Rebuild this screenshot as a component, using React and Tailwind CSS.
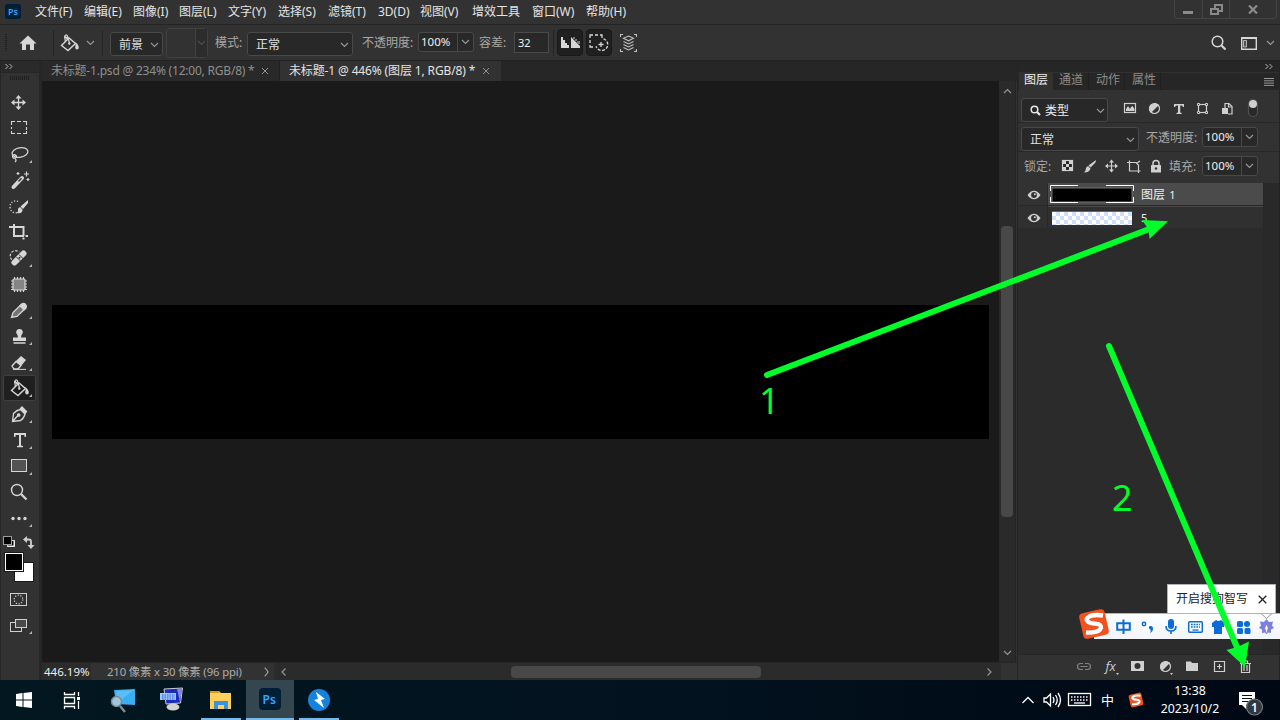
const menus = [
    { label: '文件(F)', width: 'w-[49px]' },
    { label: '编辑(E)', width: 'w-[49px]' },
    { label: '图像(I)', width: 'w-[46px]' },
    { label: '图层(L)', width: 'w-[49px]' },
    { label: '文字(Y)', width: 'w-[50px]' },
    { label: '选择(S)', width: 'w-[50px]' },
    { label: '滤镜(T)', width: 'w-[50px]' },
    { label: '3D(D)', width: 'w-[42px]' },
    { label: '视图(V)', width: 'w-[52px]' },
    { label: '增效工具', width: 'w-[60px]' },
    { label: '窗口(W)', width: 'w-[54px]' },
    { label: '帮助(H)', width: 'w-[50px]' },
];

const Chevron = ({ className = '' }) => (
    <svg width="9" height="6" viewBox="0 0 9 6" fill="none" stroke="#969696" strokeWidth="1.2" className={`shrink-0 ${className}`}>
        <path d="M1 1l3.5 3.5L8 1" />
    </svg>
);

const Select = ({ label, className = '' }) => (
    <div className={`flex h-6 shrink-0 items-center justify-between rounded-[3px] border border-[#484848] bg-[#282828] pt-[2px] pr-[3px] pl-2 text-[#e0e0e0] ${className}`}>
        <span>{label}</span>
        <Chevron />
    </div>
);

const NumberBox = ({ value, className = '' }) => (
    <div className={`flex h-5 w-14 shrink-0 rounded-[3px] border border-[#484848] bg-[#282828] leading-[18px] text-[#eeeeee] ${className}`}>
        <span className="w-[39px] border-r border-[#484848] pl-[2px] text-[11.500px]">{value}</span>
        <span className="flex flex-1 items-center justify-center">
            <Chevron />
        </span>
    </div>
);

const Bucket = () => (
    <g fill="none" stroke="#d6d6d6" strokeWidth="1.4">
        <path d="M11.500 15.500L19 8l6.500 5.500L18 20.500z" />
        <path d="M19.500 13l-2-7q-.8-1.500-2-.8t-.8 2l.8 5" strokeWidth="1.200" />
        <path d="M14.500 6.500l3.500 2.500" strokeWidth="2" />
        <path d="M19.500 8.500l5 3.500q4 1.500 4.300 5.500 0 2-1.800 2t-1.800-2l.5-3.500z" fill="#d6d6d6" stroke="none" />
        <circle cx="19.300" cy="13.500" r="1.200" fill="#d6d6d6" stroke="none" />
    </g>
);

// every tool is drawn in a 40x26 cell
const tools = [
    {
        id: 'move',
        icon: (
            <g fill="#d6d6d6" stroke="#d6d6d6">
                <path d="M18.500 8v11M13 13.500h11" strokeWidth="1.300" />
                <path d="M18.500 6l3 3.500h-6zM18.500 21l3-3.500h-6zM11 13.500l3.500-3v6zM26 13.500l-3.500-3v6z" stroke="none" />
            </g>
        ),
    },
    { id: 'marquee', icon: <path d="M11.500 10V6.500H15M17 6.500h4M23 6.500h3.500V10M26.500 12v3M26.500 16v2.500H23M21 18.500h-4M15 18.500h-3.500V16M11.500 14v-2" fill="none" stroke="#d6d6d6" strokeWidth="1.100" /> },
    {
        id: 'lasso',
        more: true,
        icon: (
            <g fill="none" stroke="#d6d6d6" strokeWidth="1.300">
                <ellipse cx="20" cy="11.500" rx="8" ry="4.800" transform="rotate(-10 20 11.500)" />
                <path d="M12.500 14q0 4 2.500 3t1-2.500t-3 0M15 17.500q2 1.500 0 3.500" />
            </g>
        ),
    },
    {
        id: 'wand',
        icon: (
            <g stroke="#d6d6d6">
                <path d="M13.500 20l8.500-9" strokeWidth="4" strokeLinecap="round" />
                <path d="M18.500 14.500l3-3.300" stroke="#323232" strokeWidth="1.400" />
                <path d="M18 5v3M16.500 6.500h3M26.500 4.500v5M24 7h5M28 11v3M26.500 12.500h3" strokeWidth="1.200" />
            </g>
        ),
    },
    {
        id: 'quick',
        icon: (
            <g>
                <path d="M18 8.500a5.500 6 0 1 0 1 10" fill="none" stroke="#d6d6d6" strokeWidth="1.400" strokeDasharray="1.200 1.700" />
                <path d="M28 7v3l-5 6-2.500-2.500zM20 14l2.500 2.500q0 4-4 3.700l-2-.3q2-1 1.500-3t2-2.900z" fill="#d6d6d6" />
            </g>
        ),
    },
    { id: 'crop', icon: <path d="M9 8h14.500v9M14 5v12h10M25.500 17h2.500M23.500 18.500v2" fill="none" stroke="#d6d6d6" strokeWidth="2" /> },
    {
        id: 'heal',
        more: true,
        icon: (
            <g>
                <circle cx="15.500" cy="11" r="5.300" fill="none" stroke="#d6d6d6" strokeWidth="1.200" strokeDasharray="2.500 1.500" />
                <path d="M14.500 17.500l9-9" stroke="#323232" strokeWidth="8" strokeLinecap="round" />
                <path d="M14.500 17.500l9-9" stroke="#d6d6d6" strokeWidth="6" strokeLinecap="round" />
                <path d="M16.500 12l5 5M19 9.500l5 5" stroke="#323232" />
                <circle cx="19.500" cy="12.800" r="1" fill="#323232" />
            </g>
        ),
    },
    {
        id: 'patch',
        icon: (
            <g stroke="#d6d6d6" strokeWidth="1.200">
                <path d="M14.500 6v15M17.500 6v15M20.500 6v15M23.500 6v15M11 10h16M11 13h16M11 16h16M11 18.500h16" />
                <rect x="13" y="8" width="12" height="11" rx="1" fill="#858585" />
            </g>
        ),
    },
    {
        id: 'pencil',
        more: true,
        icon: (
            <g stroke="#d6d6d6" strokeWidth="1.300">
                <path d="M11.500 20.500l1.500-5 9-8.700q2-1 3.500.7t.3 3.500L17 19.500z" fill="#747474" />
                <path d="M21.500 7.500q2-1.500 3.700.3t.3 3.700l-1.500 1.300-4-4z" fill="#d6d6d6" />
            </g>
        ),
    },
    { id: 'stamp', more: true, icon: <path d="M19.500 6a3.300 3.300 0 0 1 2 6l-.5 2.500h5v3.500H13v-3.500h5l-.5-2.500a3.300 3.300 0 0 1 2-6zM13.500 19.300h12v1.500h-12z" fill="#d6d6d6" /> },
    {
        id: 'eraser',
        more: true,
        icon: (
            <g>
                <path d="M12 17l4-4.500 5 4-3 3.500h-4z" fill="none" stroke="#d6d6d6" strokeWidth="1.300" />
                <path d="M16 12l5-5 5 4-5 6z" fill="#d6d6d6" />
                <path d="M13 20.400h13" stroke="#d6d6d6" />
            </g>
        ),
    },
    { id: 'bucket', more: true, active: true, icon: <Bucket /> },
    {
        id: 'pen',
        more: true,
        icon: (
            <g fill="none" stroke="#d6d6d6" strokeWidth="1.300">
                <path d="M12.500 20.500l1-8q3-3.500 7-4l4.500 4.500q-1 4.500-4.500 6.500zM12.500 20.500l5.500-6" />
                <path d="M20.500 7.500l1.500-1.500 4.500 4.500-1.500 2z" fill="#d6d6d6" />
                <circle cx="18.700" cy="14" r="1.200" fill="#d6d6d6" />
            </g>
        ),
    },
    { id: 'type', more: true, icon: <path d="M14 6h12v4h-1.300l-.5-2H21v10.500l2 .5v1.200h-6V19l2-.5V8h-3.200l-.5 2H14z" fill="#d6d6d6" /> },
    { id: 'shape', more: true, icon: <rect x="11.500" y="6.500" width="15" height="12" fill="#535353" stroke="#d6d6d6" /> },
    {
        id: 'zoom',
        icon: (
            <g fill="none" stroke="#d6d6d6">
                <circle cx="17" cy="11" r="5.500" strokeWidth="1.400" />
                <path d="M21 15l5.500 5.500" strokeWidth="2.300" />
            </g>
        ),
    },
    {
        id: 'more',
        more: true,
        icon: (
            <g fill="#d6d6d6">
                <circle cx="13" cy="13.500" r="1.700" />
                <circle cx="19" cy="13.500" r="1.700" />
                <circle cx="25" cy="13.500" r="1.700" />
            </g>
        ),
    },
];

const MenuBar = () => (
    <div className="flex h-[25px] shrink-0 border-b border-[#232323]">
        <div className="mt-1 mr-[14px] ml-[5px] flex h-[15px] w-4 items-center justify-center rounded-[3px] bg-[#001e36] text-[9px] font-semibold text-[#31a8ff]">Ps</div>
        {menus.map((m) => (
            <span key={m.label} className={`${m.width} shrink-0 whitespace-nowrap leading-6 text-[#e4e4e4]`}>{m.label}</span>
        ))}
        <div className="mr-[3px] ml-auto flex h-[19px] w-[103px] rounded-b border border-t-0 border-[#444444] text-[#8a8a8a]">
            <div className="flex w-7 justify-center border-r border-[#444444] pr-px">
                <i className="mt-[11px] h-[3px] w-[10px] bg-[#8a8a8a]" />
            </div>
            <div className="flex w-[27px] justify-center border-r border-[#444444]">
                <svg width="13" height="12" viewBox="0 0 13 12" className="mt-1" fill="none" stroke="#8a8a8a" strokeWidth="2">
                    <path d="M5 4V1h7v6H8M1 5h7v5H1z" />
                </svg>
            </div>
            <div className="flex flex-1 justify-center">
                <svg width="10" height="9" viewBox="0 0 10 9" className="mt-[5px]" stroke="#8a8a8a" strokeWidth="2.200">
                    <path d="M1 .5l8 8M9 .5l-8 8" />
                </svg>
            </div>
        </div>
    </div>
);

const OptionsBar = () => (
    <div className="flex h-9 shrink-0 items-center border-b border-[#232323]">
        <div className="ml-[5px] h-[18px] w-[2px] bg-[repeating-linear-gradient(#1f1f1f_0_1px,#323232_1px_2px)]" />
        <svg width="18" height="16" viewBox="0 0 18 16" fill="#d6d6d6" className="ml-3">
            <path d="M9 .5l8.500 8H15V15h-4V9.500H7V15H3V8.500H.5z" />
        </svg>
        <i className="ml-4 h-[26px] w-px bg-[#242424]" />
        <svg width="22" height="26" viewBox="9 0 22 26" className="ml-[5px]">
            <Bucket />
        </svg>
        <Chevron className="ml-[5px]" />
        <i className="ml-[7px] h-[26px] w-px bg-[#242424]" />
        <Select label="前景" className="mt-[2px] ml-[7px] w-[53px]" />
        <div className="ml-[3px] flex h-[30px] w-[42px] items-center justify-end rounded-sm border border-[#414141]">
            <div className="flex h-full w-3 items-center justify-center border-l border-[#414141] bg-[#2c2c2c]">
                <Chevron className="opacity-30" />
            </div>
        </div>
        <span className="ml-[7px] w-8 shrink-0 text-[#a8a8a8]">模式:</span>
        <Select label="正常" className="mt-[2px] w-[106px]" />
        <span className="ml-[9px] w-[56px] shrink-0 text-[#a8a8a8]">不透明度:</span>
        <NumberBox value="100%" className="mb-px" />
        <span className="ml-[5px] w-[35px] shrink-0 text-[#a8a8a8]">容差:</span>
        <div className="mb-px h-[21px] w-[35px] shrink-0 border border-[#4a4a4a] bg-[#282828] pl-[3px] text-[11px] leading-[19px] text-[#eeeeee]">32</div>
        <i className="ml-1 h-[26px] w-px bg-[#242424]" />
        <div className="ml-[3px] flex h-[27px] w-[26px] items-center justify-center rounded-sm border border-[#191919] bg-[#202020]">
            <svg width="19" height="13" viewBox="0 0 19 13" fill="#d6d6d6">
                <path d="M0 1h2v3h2v3h2v2h2v3H0zM10 1l9 9v2h-9z" />
                <path d="M12 1h2v2h-2zM14 3h2v2h-2zM16 5h3v3h-3z" fill="#777777" />
            </svg>
        </div>
        <div className="ml-[3px] flex h-[27px] w-[26px] items-center justify-center rounded-sm border border-[#191919] bg-[#202020]">
            <svg width="20" height="18" viewBox="0 0 20 18" fill="none" stroke="#d6d6d6" strokeWidth="1.300">
                <path d="M1 4V1h3M6 1h3M11 1h2v3M1 6v3M1 11v2h3M12 8v5M9.500 10.500h5" />
                <path d="M14.500 4.800a6 6 0 1 1-7.500 7.500" strokeDasharray="3 1.500" />
            </svg>
        </div>
        <svg width="17" height="18" viewBox="0 0 17 18" fill="none" stroke="#c2c2c2" strokeWidth="1.100" className="ml-2">
            <path d="M.5 3V.5H3M14 .5h2.500V3M.5 15v2.500H3M14 17.500h2.500V15" />
            <path d="M8.500 2l5 2.300-5 2.500-5-2.500zM3.500 7.500l5 2.500 5-2.500M3.500 10.500l5 2.500 5-2.500M3.500 13.500L8.500 16l5-2.500" />
        </svg>
        <svg width="16" height="16" viewBox="0 0 16 16" fill="none" stroke="#d6d6d6" className="ml-auto">
            <circle cx="6.500" cy="6.500" r="5.300" strokeWidth="1.500" />
            <path d="M10.500 10.500l4 4" strokeWidth="2.200" />
        </svg>
        <svg width="16" height="13" viewBox="0 0 16 13" fill="none" stroke="#d6d6d6" className="mt-[2px] ml-[14px]">
            <path d="M.7.5h14.600v11.800H.7z" strokeWidth="1.400" />
            <path d="M0 1.500h16" />
            <path d="M2.500 3.500h3v6.500h-3zM4 4.500v1M4 6.500v1M4 8.500v1" strokeWidth=".8" />
        </svg>
        <Chevron className="mr-[5px] ml-[9px]" />
    </div>
);

const ToolBar = () => (
    <div className="flex w-[41px] shrink-0 flex-col border-r-2 border-l border-[#262626]">
        <div className="h-3 border-b border-[#262626] bg-[#2a2a2a] pl-1">
            <svg width="8" height="11" viewBox="0 0 8 11" fill="none" stroke="#b8b8b8">
                <path d="M.5 3L3 5.500.5 8M4.500 3L7 5.500 4.500 8" />
            </svg>
        </div>
        <div className="mt-[3px] mb-[9px] ml-[9px] h-1 w-5 bg-[repeating-linear-gradient(90deg,#1f1f1f_0_1px,#323232_1px_2px)]" />
        {tools.map((t) => (
            <svg key={t.id} width="38" height="26" viewBox="1 0 38 26" className="shrink-0">
                {t.active && <rect x="3.500" y=".5" width="32" height="25" rx="2" fill="#1f1f1f" stroke="#404040" />}
                {t.icon}
                {t.more && <path d="M32 19v3h-3z" fill="#b5b5b5" />}
            </svg>
        ))}
        <svg width="38" height="110" viewBox="1 531 38 110" className="shrink-0">
            <rect x="7.500" y="540.500" width="7" height="6" fill="#000" stroke="#d0d0d0" />
            <path d="M8 546h6v-5" fill="none" stroke="#fff" />
            <rect x="3.500" y="536.500" width="8" height="8" fill="#000" stroke="#9a9a9a" />
            <path d="M25 539.500h4q2 0 2 2v4" fill="none" stroke="#d0d0d0" strokeWidth="1.800" />
            <path d="M23 539.500l4-3.500v7zM31 549l-3.500-4h7z" fill="#d0d0d0" />
            <rect x="14.500" y="562.500" width="19" height="19" fill="#fff" stroke="#1a1a1a" />
            <rect x="4.500" y="552.500" width="19" height="19" fill="#000" stroke="#1a1a1a" />
            <rect x="5.500" y="553.500" width="17" height="17" fill="#000" stroke="#fff" />
            <rect x="10.500" y="593.500" width="16" height="12" fill="none" stroke="#d0d0d0" />
            <circle cx="18.500" cy="599.500" r="4.300" fill="none" stroke="#d0d0d0" strokeWidth="1.200" strokeDasharray="1.200 1.500" />
            <rect x="10.500" y="622.500" width="11" height="9" fill="none" stroke="#d0d0d0" />
            <rect x="15.500" y="619.500" width="11" height="8" fill="#484848" stroke="#d0d0d0" />
            <path d="M32 631v3h-3z" fill="#b5b5b5" />
        </svg>
    </div>
);

const Close = ({ className }) => (
    <svg width="8" height="8" viewBox="0 0 8 8" stroke="#909090" className={className}>
        <path d="M1 1l6 6M7 1L1 7" />
    </svg>
);

const Document = () => (
    <div className="flex w-[976px] shrink-0 flex-col border-l border-[#262626]">
        <div className="flex h-5 shrink-0 bg-[#262626] leading-5">
            <div className="flex w-[238px] items-center border-r border-[#202020] bg-[#292929] pl-[9px] whitespace-nowrap text-[#8f8f8f]">
                <span className="w-[210px] tracking-[-0.21px]">未标题-1.psd @ 234% (12:00, RGB/8) *</span>
                <Close />
            </div>
            <div className="flex w-[221px] items-center bg-[#323232] pl-[9px] whitespace-nowrap text-[#e4e4e4]">
                <span className="w-[193px] tracking-[-0.14px]">未标题-1 @ 446% (图层 1, RGB/8) *</span>
                <Close />
            </div>
        </div>
        <div className="flex flex-1">
            <div className="flex w-[957px] flex-col bg-[#1a1a1a]">
                <div className="mt-[224px] ml-[10px] h-[134px] w-[937px] bg-black" />
            </div>
            <div className="flex w-[17px] flex-col items-center border-r border-[#242424] bg-[#2a2a2a] pt-[7px] pb-[6px]">
                <Chevron className="rotate-180" />
                <div className="mt-[132px] mb-auto h-[291px] w-3 rounded-sm bg-[#484848]" />
                <Chevron />
            </div>
        </div>
        <div className="flex h-[18px] shrink-0 items-center border-t border-[#262626] bg-[#2b2b2b] text-[11px] leading-4">
            <span className="w-[49px] pl-[2px] text-[11.500px] text-[#eeeeee]">446.19%</span>
            <div className="flex h-full w-[183px] items-center bg-[#323232] pl-4 text-[#adadad]">
                <span className="w-[157px] whitespace-nowrap text-[11.300px] tracking-[-0.12px]">210 像素 x 30 像素 (96 ppi)</span>
                <svg width="5" height="10" viewBox="0 0 5 10" fill="none" stroke="#a0a0a0" strokeWidth="1.200">
                    <path d="M.7.700Q3 3 4 5Q3 7 .7 9.300" />
                </svg>
            </div>
            <Chevron className="ml-[5px] rotate-90" />
            <div className="ml-[223px] h-3 w-[250px] rounded-sm bg-[#484848]" />
            <Chevron className="ml-auto -rotate-90" />
            <div className="ml-[7px] h-full w-4 bg-[#323232]" />
        </div>
    </div>
);

const Eye = () => (
    <svg width="14" height="10" viewBox="0 0 14 10" className="mt-[2px]">
        <path d="M.5 5Q3.500.7 7 .7T13.500 5Q10.500 9.300 7 9.300T.5 5z" fill="#d0d0d0" />
        <circle cx="7" cy="5" r="2.900" fill="#323232" />
        <circle cx="7.800" cy="4.200" r="1" fill="#d0d0d0" />
    </svg>
);

const LayersPanel = () => (
    <div className="flex w-[263px] flex-col border-r border-l border-[#242424] bg-[#323232]">
        <div className="flex h-3 shrink-0 items-center justify-end border-b border-[#303030] bg-[#262626] pr-[6px]">
            <svg width="8" height="7" viewBox="0 0 8 7" fill="none" stroke="#b8b8b8">
                <path d="M.5 1L3 3.500.5 6M4.500 1L7 3.500 4.500 6" />
            </svg>
        </div>
        <div className="flex h-[17px] shrink-0 items-center bg-[#262626] leading-[14px] text-[#8d8d8d]">
            <span className="ml-px h-full w-[34px] bg-[#323232] pl-[5px] text-[#eeeeee]">图层</span>
            <span className="h-full w-[36px] border-r border-[#202020] pl-[6px]">通道</span>
            <span className="h-full w-[36px] border-r border-[#202020] pl-[7px]">动作</span>
            <span className="h-full w-[36px] border-r border-[#202020] pl-[7px]">属性</span>
            <svg width="10" height="8" viewBox="0 0 10 8" stroke="#969696" className="mr-[5px] ml-auto">
                <path d="M0 .5h10M0 2.800h10M0 5.100h10M0 7.400h10" />
            </svg>
        </div>
        <div className="flex h-[33px] shrink-0 border-b border-[#282828] pt-2 pl-[3px]">
            <div className="flex h-6 w-[87px] shrink-0 items-center rounded-[3px] border border-[#484848] bg-[#282828] pt-px text-[#eeeeee]">
                <svg width="11" height="11" viewBox="0 0 11 11" fill="none" stroke="#e6e6e6" className="ml-2">
                    <circle cx="4.500" cy="4.500" r="3.300" strokeWidth="1.500" />
                    <path d="M7 7l3 3" strokeWidth="2.200" />
                </svg>
                <span className="ml-1">类型</span>
                <Chevron className="mr-[2px] ml-auto" />
            </div>
            <svg width="150" height="22" viewBox="1108 98 150 22" fill="none" stroke="#d0d0d0" strokeWidth="1.200">
                <rect x="1124.500" y="103.500" width="11" height="9" />
                <path d="M1126 111v-2l2-3 2 3 1-2 1.500-1 2 3v2z" fill="#d0d0d0" stroke="none" />
                <circle cx="1154.500" cy="108.500" r="5" />
                <path d="M1151 112a5 5 0 0 1 7-7z" fill="#d0d0d0" />
                <path d="M1174 104h10v3h-1l-1-1.500h-1.800v7l1.500.5v1h-5.200v-1l1.500-.5v-7H1176l-1 1.500h-1z" fill="#d0d0d0" stroke="none" />
                <rect x="1198.500" y="104.500" width="8" height="8" />
                <path d="M1197.500 103.500h2v2h-2zM1205.500 103.500h2v2h-2zM1197.500 111.500h2v2h-2zM1205.500 111.500h2v2h-2z" fill="#323232" strokeWidth="1" />
                <path d="M1225 108v-4.500h4l3 3v7.500h-4" />
                <path d="M1228.500 104v3h3" />
                <rect x="1222" y="108" width="6" height="6" fill="#d0d0d0" stroke="none" />
                <rect x="1248.500" y="99.500" width="9" height="17" rx="4.500" fill="#282828" stroke="#515151" />
                <circle cx="1253" cy="104" r="4" fill="#d0d0d0" stroke="none" />
            </svg>
        </div>
        <div className="flex h-[29px] shrink-0 border-b border-[#282828] pt-1 pl-[3px]">
            <Select label="正常" className="w-[118px]" />
            <span className="ml-[7px] w-14 leading-[21px] text-[#a8a8a8]">不透明度:</span>
            <NumberBox value="100%" />
        </div>
        <div className="flex h-[31px] shrink-0 pt-1 pl-[6px]">
            <span className="w-8 leading-[21px] text-[#a8a8a8]">锁定:</span>
            <svg width="114" height="22" viewBox="1056 156 114 22" fill="none" stroke="#d0d0d0" strokeWidth="1.200">
                <rect x="1062.500" y="160.500" width="10" height="10" fill="#252525" />
                <path d="M1063 161h3v3h-3zM1069 161h3v3h-3zM1066 164h3v3h-3zM1063 167h3v3h-3zM1069 167h3v3h-3z" fill="#d0d0d0" stroke="none" />
                <path d="M1096 160l-.5 2.500-5 5-2-2zM1088 166l2.500 2.500q-1 4-6.500 4q2-2 1.800-3.500t2.200-3z" fill="#d0d0d0" stroke="none" />
                <path d="M1111.500 161v10M1106 166h11" />
                <path d="M1111.500 159.500l2.500 3h-5zM1111.500 172.500l2.500-3h-5zM1105 166l3-2.500v5zM1118 166l-3-2.500v5z" fill="#d0d0d0" stroke="none" />
                <path d="M1127 162.500h9l2.500 2.500v8M1129.500 160.500v10.500h11M1137 163l3-2" />
                <path d="M1153 166v-2.500a3 3 0 0 1 6 0v2.500" strokeWidth="1.500" />
                <rect x="1151" y="165" width="10" height="7.500" rx=".5" fill="#d0d0d0" stroke="none" />
                <circle cx="1156" cy="168.500" r="1.200" fill="#323232" stroke="none" />
            </svg>
            <span className="-ml-px w-[33px] leading-[21px] text-[#a8a8a8]">填充:</span>
            <NumberBox value="100%" />
        </div>
        <div className="flex min-h-0 flex-1 bg-[#2b2b2b]">
            <div className="flex w-[245px] flex-col">
                <div className="flex h-[23px] border-b border-[#282828] bg-[#323232]">
                    <div className="flex w-[30px] items-center justify-center border-r border-[#282828] pl-[2px]"><Eye /></div>
                    <div className="flex flex-1 items-center bg-[#4b4b4b]">
                        <svg width="86" height="19" viewBox="1049 185 86 19" className="ml-px" fill="none">
                            <rect x="1052" y="188" width="80" height="14" fill="#000" stroke="#777777" />
                            <path d="M1050.500 191v-5.500h27.500M1106 185.500h27.500V191M1050.500 197v5.500h27.500M1106 202.500h27.500V197" stroke="#fff" />
                        </svg>
                        <span className="mt-[2px] ml-[6px] text-[#eeeeee]">图层 <span className="ml-px text-[11px]">1</span></span>
                    </div>
                </div>
                <div className="flex h-[22px] bg-[#303030]">
                    <div className="flex w-[30px] items-center justify-center border-r border-[#282828] pl-[2px]"><Eye /></div>
                    <div className="flex flex-1 items-center border-t border-[#484848]">
                        <div className="ml-1 h-[14px] w-20 border-t border-[#666666] bg-white bg-[conic-gradient(#cfe0f8_25%,#ffffff_0_50%,#cfe0f8_0_75%,#ffffff_0)] bg-[size:8px_8px]" />
                        <span className="ml-[9px] text-[11px] text-[#eeeeee]">5</span>
                    </div>
                </div>
            </div>
            <div className="flex-1 border-l border-[#272727] bg-[#292929]" />
        </div>
        <div className="h-[26px] shrink-0 border-t border-[#262626]">
            <svg width="180" height="24" viewBox="1073 655 180 24" className="ml-[55px]" fill="none" stroke="#d0d0d0" strokeWidth="1.200">
                <path d="M1083 663.500h-2.500a3 3 0 0 0 0 6h2.500M1085 663.500h2.500a3 3 0 0 1 0 6H1085M1080.500 666.500h7" stroke="#828282" />
                <text x="1105.500" y="671" fontSize="13" fontStyle="italic" fontFamily="Open Sans, sans-serif" fill="#d0d0d0" stroke="none">fx</text>
                <path d="M1116 673h3l-1.500 2zM1170 673h3l-1.500 2z" fill="#d0d0d0" stroke="none" />
                <rect x="1131" y="661" width="13" height="10" fill="#d0d0d0" stroke="none" />
                <circle cx="1137.500" cy="666" r="3" fill="#323232" stroke="none" />
                <circle cx="1165.500" cy="666.500" r="5" />
                <path d="M1162 670a5 5 0 0 1 7-7z" fill="#d0d0d0" />
                <path d="M1186 661.500h5l1 1.500h6v8h-12z" fill="#d0d0d0" stroke="none" />
                <path d="M1214.500 661.500h10v10h-10zM1219.500 664v5M1217 666.500h5" />
                <path d="M1240 663.500h11M1243.500 663v-2h4v2M1241.500 664v8.500h8V664M1244 665v6M1247 665v6" />
            </svg>
        </div>
    </div>
);

const SogouLogo = ({ size, className = '' }) => (
    <svg width={size} height={size} viewBox="0 0 32 32" className={className}>
        <rect x="3" y="3" width="26" height="26" rx="4" fill="#f4511e" transform="rotate(-13 16 16)" />
        <path d="M25 7.500Q15 6 10.500 9T12 14.800L20 16q5 2 2 5.500T8 24.500" fill="none" stroke="#fff" strokeWidth="4.300" />
    </svg>
);

const TaskBar = () => (
    <div className="flex h-10 shrink-0 bg-linear-to-r from-[#02171f] via-[#02131f] to-[#000814]">
        <svg width="342" height="40" viewBox="0 680 342 40" className="shrink-0">
            <path d="M16 694l6.500-1v6.500H16zM23.500 693l8.500-1v7.500h-8.500zM16 700.500h6.500v6.500l-6.500-1zM23.500 700.500H32v7.500l-8.500-1z" fill="#fff" />
            <path d="M64.500 692v2.500h10V692M64.500 697.500h10v6h-10zM64.500 709v-2.500h10v2.500M78.500 692v4M78.500 701v8" fill="none" stroke="#fff" strokeWidth="1.300" />
            <rect x="77" y="697" width="3" height="3" fill="#fff" />
            <path d="M114 690l21-1v16l-19-1z" fill="#39aef0" />
            <path d="M116 691l18-1-17 13z" fill="#5cbcf5" />
            <circle cx="116.500" cy="701.500" r="5" fill="#9fc6da" stroke="#7b8b96" strokeWidth="1.500" />
            <path d="M120 706l5 6" stroke="#7b8b96" strokeWidth="2.500" />
            <ellipse cx="173" cy="707" rx="6.500" ry="3.500" fill="#d3d3d3" />
            <path d="M164 689l18.500-1-2 15-14.500 1z" fill="#1b2bbe" stroke="#ccc" />
            <path d="M177 689l5 0-2 13z" fill="#7f8ad8" />
            <rect x="160" y="693" width="16" height="7" fill="#9dc7ff" />
            <path d="M162 695h13M162 697h13M162 699h13" stroke="#2b5fd1" strokeDasharray="1.500 1" />
            <path d="M210 691h9l2 2h10v16h-21z" fill="#ffd15c" />
            <path d="M210 691h9l1 2h-10z" fill="#d79b16" />
            <path d="M214 709v-8h14v8h-4v-4h-6v4z" fill="#3c93dc" />
            <path d="M246 680h48v40h-48z" fill="#34474f" />
            <rect x="259" y="688" width="22" height="22" rx="4" fill="#001e36" />
            <text x="262.500" y="703.500" fontSize="12" fontWeight="600" fontFamily="Noto Sans, sans-serif" fill="#31a8ff">Ps</text>
            <circle cx="319" cy="700" r="11" fill="#1583dc" />
            <path d="M316 692l9 7-4 1 3 8-10-8 4-1z" fill="#fff" />
            <path d="M201 718h40v2h-40zM246 718h48v2h-48zM299 718h40v2h-40z" fill="#76b9ed" />
        </svg>
        <svg width="80" height="40" viewBox="1016 680 80 40" className="ml-auto shrink-0" fill="none" stroke="#fff" strokeWidth="1.300">
            <path d="M1022.500 703l5.500-5.500 5.500 5.500M1044 698h2.500l4-4v12l-4-4h-2.500zM1053 697q2 3 0 6M1055.500 695q3.500 5 0 10M1058 693q5 7 0 14" />
            <rect x="1068.500" y="693.500" width="22" height="12" />
            <path d="M1071 697h17M1071 700h17" strokeDasharray="1.500 1.500" />
            <path d="M1074 703h11" />
        </svg>
        <span className="ml-[5px] w-[27px] text-[13px] leading-10 text-white">中</span>
        <SogouLogo size="16" className="mt-3 shrink-0" />
        <div className="ml-[7px] mr-px flex w-[78px] flex-col items-center pt-[2px] text-[12.300px] leading-[18px] text-white">
            <span>13:38</span>
            <span>2023/10/2</span>
        </div>
        <svg width="44" height="40" viewBox="1230 680 44 40" className="mr-[6px] shrink-0">
            <path d="M1239 692h16v13h-9v4l-4-4h-3z" fill="#fff" />
            <path d="M1242 695.500h10M1242 698.500h10M1242 701.500h7" stroke="#02101a" />
            <circle cx="1254.500" cy="707" r="8" fill="#303840" stroke="#747a80" strokeWidth="1.200" />
            <text x="1251" y="711.500" fontSize="12" fontWeight="600" fontFamily="Noto Sans, sans-serif" fill="#fff">1</text>
        </svg>
    </div>
);

// input method toolbar that floats above the layers panel
const SogouBar = () => (
    <div className="absolute top-[584px] left-[1078px] w-[202px]">
        <div className="ml-[89px] flex h-[30px] w-[109px] items-center border border-[#b0b4ba] bg-white pl-2 text-[12px] text-[#222222]">
            <span className="w-[82px]">开启搜狗智写</span>
            <svg width="9" height="9" viewBox="0 0 9 9" stroke="#222222" strokeWidth="1.300">
                <path d="M.7.700l7.600 7.600M8.300.700L.7 8.300" />
            </svg>
        </div>
        <div className="-mt-px ml-4 flex h-[26px] items-center border-t border-[#b0b4ba] bg-linear-to-b from-[#ffffff] to-[#f2f5fc]">
            <svg width="186" height="26" viewBox="1094 613 186 26" fill="#0b6cd8">
                <path d="M1117.200 622.200h12.600v6.600h-12.600zM1123.500 618.500v14.500" fill="none" stroke="#0b6cd8" strokeWidth="2" />
                <circle cx="1144" cy="623" r="1.700" fill="none" stroke="#0b6cd8" strokeWidth="1.500" />
                <path d="M1149.500 625q3.500-.5 3.500 2.500 0 3-3 4.500 1.300-2 .5-3.500-2.500-1-1-3.500z" />
                <rect x="1168" y="618" width="6" height="10" rx="3" />
                <path d="M1166 625q0 5 5 5t5-5M1171 630v3" fill="none" stroke="#0b6cd8" strokeWidth="1.600" />
                <rect x="1188.700" y="620.700" width="13.600" height="10.600" rx="1" fill="none" stroke="#0b6cd8" strokeWidth="1.500" />
                <path d="M1191 623.500h9M1191 626h9" stroke="#0b6cd8" strokeWidth="1.500" strokeDasharray="1.700 1" />
                <path d="M1192.500 629h6" stroke="#0b6cd8" strokeWidth="1.300" />
                <path d="M1212 622l4-3q3 2 5 0l4 3-1 4h-2v7h-8v-7h-2z" />
                <rect x="1237" y="620" width="6" height="6" rx="1.500" />
                <circle cx="1247" cy="623" r="3" />
                <rect x="1237" y="627" width="6" height="6" rx="1.500" />
                <rect x="1244.500" y="627" width="6" height="6" rx="1.500" />
                <path d="M1266.500 618l2.500 3 4-.5-1 4 2 2.500-3 1.500v3.500l-3-.5-1.500 1.500-1.500-1.500-3 .5v-3.500l-3-1.500 2-2.500-1-4 4 .5z" fill="#7583e0" />
                <path d="M1266.500 623l1.800 4-1.800 6-1.800-6z" fill="#fff" stroke="#b06bd0" strokeWidth=".8" />
                <path d="M1261 612.500l5.500 5 5.500-5" fill="#fff" stroke="#8f949c" />
            </svg>
        </div>
        <SogouLogo size="32" className="absolute top-6 left-0" />
    </div>
);

const Annotations = () => (
    <svg width="1280" height="720" viewBox="0 0 1280 720" className="pointer-events-none absolute top-0 left-0" fill="#00ff2a">
        <path d="M767 375L1152 228M1109 346L1239 652" stroke="#00ff2a" strokeWidth="6" strokeLinecap="round" />
        <path d="M1168 221.300L1142 220l6.500 9.300 1 9.700zM1245 667l-18.500-17 11-3 11.500-5.500z" />
        <text x="759" y="414" fontSize="36" fontFamily="Noto Sans, sans-serif">1</text>
        <text x="1112" y="511" fontSize="36" fontFamily="Noto Sans, sans-serif">2</text>
    </svg>
);

const App = () => {
    return (
        <div className="relative flex h-[720px] w-[1280px] flex-col overflow-hidden bg-[#323232] font-['Noto_Sans','Noto_Sans_CJK_SC',sans-serif] text-[12px] leading-5">
            <MenuBar />
            <OptionsBar />
            <div className="flex min-h-0 flex-1">
                <ToolBar />
                <Document />
                <LayersPanel />
            </div>
            <TaskBar />
            <SogouBar />
            <Annotations />
        </div>
    );
};

export default App;
